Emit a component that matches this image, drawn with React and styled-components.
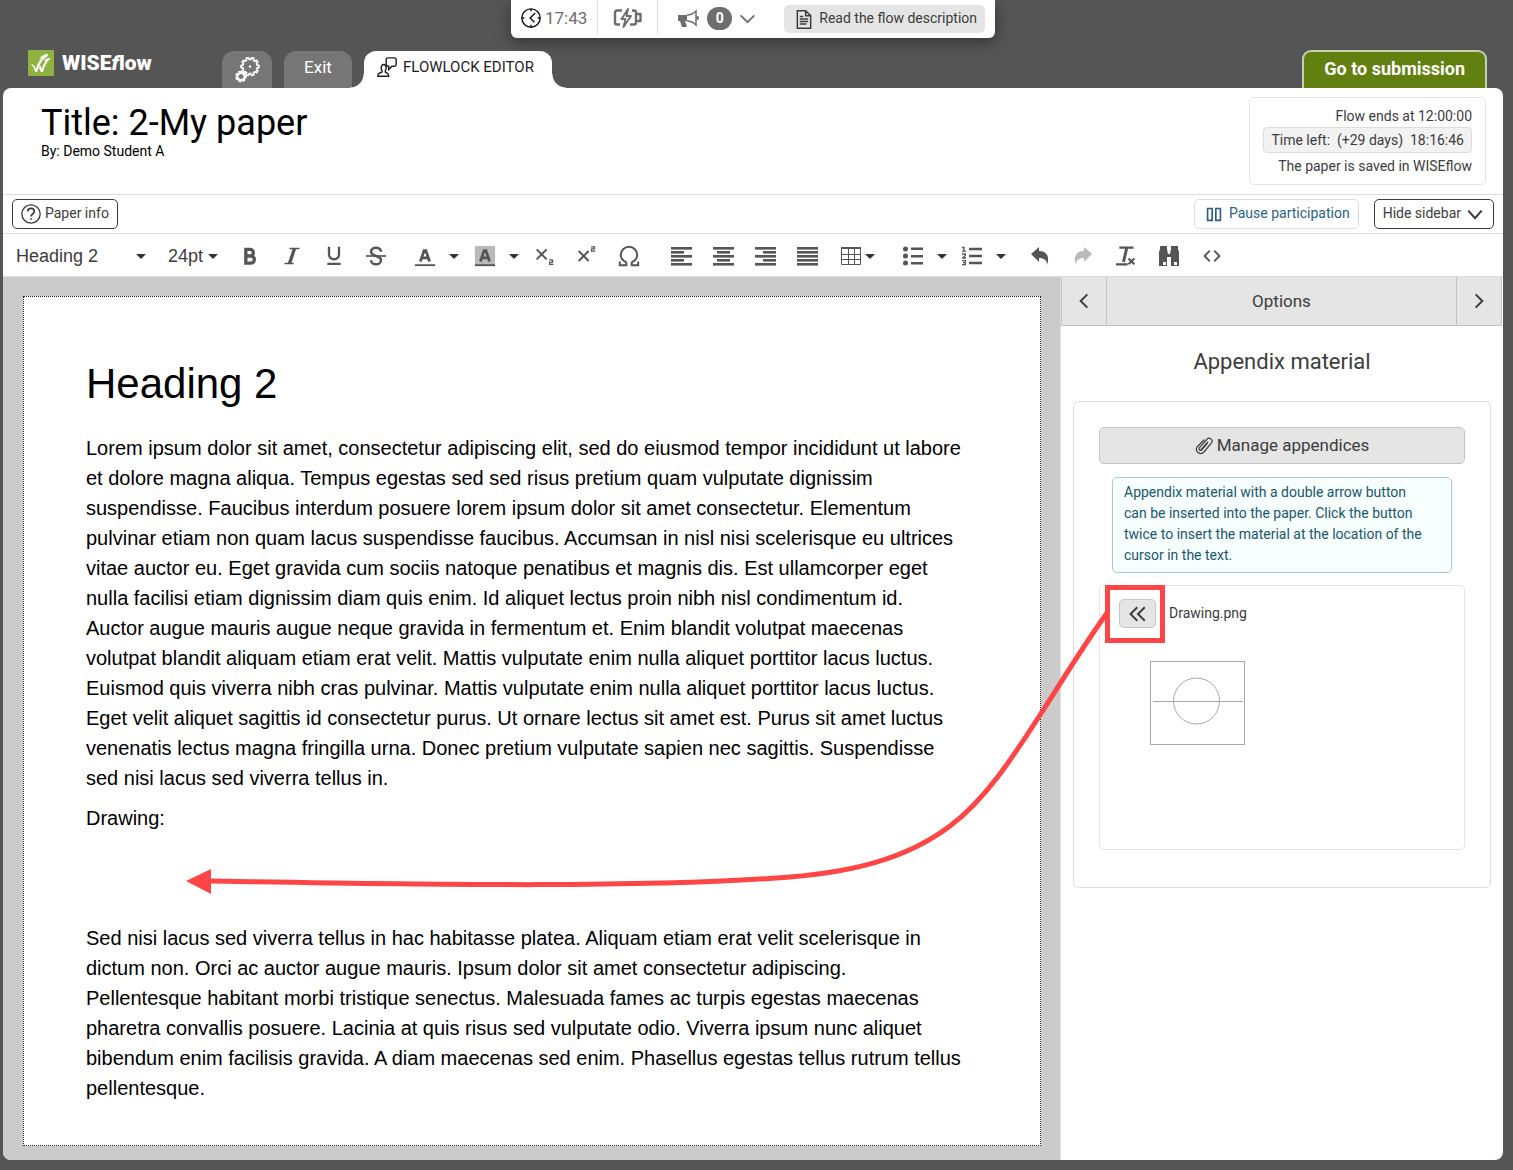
import React from 'react';
import styled, { createGlobalStyle } from 'styled-components'

const GlobalStyle = createGlobalStyle`
*{
  box-sizing: border-box;
}
body{
  margin: 0;
  background-color: #555555;
  color: #3c3c3c;
  font-family: Roboto, "Liberation Sans", sans-serif;
  font-size: 14px;
}
button, select{
  font-family: inherit;
  font-size: inherit;
  color: inherit;
  margin: 0;
  padding: 0;
  cursor: pointer;
}
svg{
  display: block;
  flex-shrink: 0;
}
`

const Page = styled.div`
min-height: 100vh;
display: flex;
flex-direction: column;
padding: 0 10px 10px 3px;
`

/* status bar */
const StatusBar = styled.div`
align-self: center;
display: flex;
align-items: center;
height: 38px;
padding-right: 10px;
background-color: white;
border-radius: 0 0 6px 6px;
box-shadow: 0 4px 16px rgba(0, 0, 0, 0.4);
color: #6e6e6e;
`
const StatusItem = styled.div`
display: flex;
align-items: center;
gap: 4px;
height: 34px;
align-self: flex-start;
padding: 2px ${props => props.$pad} 0;
font-size: 17px;
border-right: ${props => props.$last ? "none" : "1px solid #dddddd"};
`
const NewsButton = styled.button`
display: flex;
align-items: center;
gap: 8px;
border: none;
background: none;
`
const Count = styled.span`
width: 25px;
height: 23px;
border-radius: 12px;
background-color: #6e6e6e;
color: white;
font-size: 14px;
font-weight: 700;
line-height: 23px;
text-align: center;
`
const DescriptionButton = styled.button`
display: flex;
align-items: center;
gap: 5px;
height: 28px;
margin-left: 10px;
padding: 0 8px 0 10px;
border: none;
border-radius: 5px;
background-color: #e5e5e5;
color: #3c3c3c;
`

/* tabs */
const TabRow = styled.header`
display: flex;
align-items: flex-end;
margin-top: 12px;
padding: 0 16px 0 25px;
`
const Logo = styled.a`
display: flex;
align-items: center;
gap: 8px;
align-self: flex-start;
width: 194px;
color: white;
font-size: 21px;
font-weight: 900;
line-height: 26px;
text-decoration: none;
`
const Tab = styled.button`
display: flex;
align-items: center;
justify-content: center;
height: 37px;
width: ${props => props.$width};
margin-right: 12px;
padding-bottom: ${props => props.$lift || "0"};
border: none;
border-radius: 12px 12px 0 0;
background-color: #767676;
color: white;
font-size: 17px;
`
const ActiveTab = styled(Tab)`
position: relative;
justify-content: flex-start;
gap: 6px;
padding: 0 0 6px 13px;
background-color: white;
color: #1e1e1e;
font-size: 15px;
&::before, &::after{
  content: "";
  position: absolute;
  bottom: 0;
  width: 14px;
  height: 14px;
}
&::before{
  right: 100%;
  background: radial-gradient(circle at 0 0, transparent 13px, white 14px);
}
&::after{
  left: 100%;
  background: radial-gradient(circle at 100% 0, transparent 13px, white 14px);
}
`
const SubmitButton = styled.button`
height: 38px;
margin-left: auto;
padding: 0 20px 4px;
border: 2px solid #c6cfae;
border-bottom: none;
border-radius: 9px 9px 0 0;
background-color: #61800f;
color: white;
font-size: 18px;
font-weight: 700;
`

/* main panel */
const Panel = styled.main`
flex: 1;
display: flex;
flex-direction: column;
border-radius: 8px;
background-color: white;
`
const TitleArea = styled.section`
display: flex;
justify-content: space-between;
align-items: flex-start;
padding: 9px 17px 9px 38px;
border-bottom: 1px solid #dddddd;
`
const Title = styled.h1`
margin: 6px 0 0;
color: black;
font-size: 36px;
font-weight: 400;
line-height: 40px;
`
const Author = styled.p`
margin: 0;
color: black;
font-size: 14px;
line-height: 16px;
`
const InfoBox = styled.div`
display: flex;
flex-direction: column;
align-items: flex-end;
height: 88px;
padding: 8px 13px;
border: 1px solid #e5e5e5;
border-radius: 5px;
line-height: 21px;
`
const TimeLeft = styled.div`
padding: 2px 7px 1px;
margin-bottom: 3px;
border: 1px solid #dddddd;
border-radius: 4px;
background-color: #f2f2f2;
white-space: pre;
`
const ActionRow = styled.div`
display: flex;
align-items: center;
gap: 15px;
padding: 4px 9px;
border-bottom: 1px solid #dddddd;
`
const ActionButton = styled.button`
display: flex;
align-items: center;
gap: 4px;
height: 30px;
padding: 0 8px;
border: 1px solid ${props => props.$light ? "#dddddd" : "#3c3c3c"};
border-radius: 5px;
background-color: white;
color: ${props => props.$light ? "#2a5f86" : "#3c3c3c"};
margin-left: ${props => props.$push ? "auto" : "0"};
`
const Label = styled.span`
padding-bottom: 2px;
`

/* editor toolbar */
const Toolbar = styled.div`
display: flex;
align-items: center;
height: 43px;
padding: 2px 0 0 13px;
border-bottom: 1px solid #dddddd;
color: #555555;
`
const SelectBox = styled.div`
position: relative;
display: flex;
align-items: center;
width: ${props => props.$width};
margin-right: ${props => props.$gap};
svg{
  position: absolute;
  right: 0;
  pointer-events: none;
}
select{
  width: 100%;
  appearance: none;
  border: none;
  background: none;
  color: #3c3c3c;
  font-family: "Liberation Sans", Arial, sans-serif;
  font-size: 18px;
}
`
const ToolButton = styled.button`
display: flex;
align-items: center;
justify-content: center;
width: ${props => props.$narrow ? "22px" : "42px"};
height: 34px;
border: none;
background: none;
opacity: ${props => props.disabled ? "0.4" : "1"};
`
const CaretButton = styled(ToolButton)`
width: 16px;
color: #333333;
`
const ToolGroup = styled.div`
display: flex;
gap: ${props => props.$loose ? "1px" : "0"};
margin-right: ${props => props.$gap || "2px"};
`

/* editor */
const Workspace = styled.div`
flex: 1;
display: grid;
grid-template-columns: minmax(0, 1fr) 443px;
`
const EditorPane = styled.div`
padding: 19px 19px 14px 20px;
border-radius: 0 0 0 8px;
background-color: #cbcbcb;
`
const Paper = styled.article`
padding: 58px 75px 42px 62px;
border: 1px dotted #222222;
background-color: white;
color: black;
font-family: "Liberation Sans", Arial, sans-serif;
font-size: 20px;
line-height: 30px;
h2{
  margin: 0 0 20px;
  font-size: 42px;
  font-weight: 400;
  line-height: 58px;
}
p{
  min-height: 30px;
  margin: 0 0 10px;
}
p:last-child{
  margin: 0;
}
`

/* sidebar */
const Sidebar = styled.aside`
border-left: 1px solid #dddddd;
`
const SideNav = styled.div`
display: flex;
height: 49px;
margin-right: 1px;
border: 1px solid #c4c4c4;
border-top: none;
background-color: #e5e5e5;
`
const NavButton = styled.button`
display: flex;
align-items: center;
justify-content: center;
width: 45px;
border: none;
background: none;
&:first-child{
  border-right: 1px solid #c4c4c4;
}
&:last-child{
  border-left: 1px solid #c4c4c4;
}
`
const NavTitle = styled.div`
flex: 1;
font-size: 17px;
line-height: 48px;
text-align: center;
`
const SideHeading = styled.h2`
margin: 20px 0 23px;
font-size: 22px;
font-weight: 400;
line-height: 32px;
text-align: center;
`
const Card = styled.section`
margin: 0 12px;
padding: 25px 25px 37px;
border: 1px solid #dddddd;
border-radius: 6px;
`
const ManageButton = styled.button`
display: flex;
align-items: center;
justify-content: center;
gap: 4px;
width: 100%;
height: 37px;
border: 1px solid #c4c4c4;
border-radius: 5px;
background-color: #e5e5e5;
font-size: 17px;
`
const Hint = styled.p`
margin: 13px 13px 12px;
padding: 4px 23px 6px 11px;
border: 1px solid #abc8d0;
border-radius: 5px;
background-color: #f7ffff;
color: #1a566c;
line-height: 21px;
`
const Material = styled.div`
min-height: 265px;
padding: 13px 19px;
border: 1px solid #e5e5e5;
border-radius: 5px;
`
const MaterialRow = styled.div`
display: flex;
align-items: center;
gap: 13px;
`
const Marked = styled.div`
position: relative;
`
const InsertButton = styled.button`
display: flex;
align-items: center;
justify-content: center;
width: 37px;
height: 29px;
border: 1px solid #c4c4c4;
border-radius: 5px;
background-color: #e5e5e5;
`
const Frame = styled.div`
position: absolute;
top: -14px;
left: -14px;
width: 60px;
height: 58px;
border: 5px solid #ff4545;
pointer-events: none;
`
const Arrow = styled.svg`
position: absolute;
top: 0;
right: 48px;
pointer-events: none;
`
const Thumb = styled.svg`
margin: 33px 0 0 31px;
`

const Line = ({ size = 24, width = 2, children, ...rest }) => (
  <svg width={size} height={size} viewBox="0 0 24 24" fill="none" stroke="currentColor" strokeWidth={width} aria-hidden="true" {...rest}>
    {children}
  </svg>
)

const Caret = () => (
  <svg width="10" height="5" viewBox="0 0 10 5" fill="#333333" aria-hidden="true">
    <path d="M0 0h10L5 5z" />
  </svg>
)

const Chevron = ({ size = 14, width = 3, points }) => (
  <Line size={size} width={width}><polyline points={points} /></Line>
)

// outline of a cog with rounded teeth
const cog = (cx, cy, inner, outer, teeth) => {
  const step = Math.PI * 2 / teeth
  const at = (r, a) => `${(cx + r * Math.cos(a)).toFixed(2)} ${(cy + r * Math.sin(a)).toFixed(2)}`
  let d = ""
  for (let i = 0; i < teeth; i++) {
    const a = i * step
    d += `${i ? "L" : "M"}${at(inner, a - step * 0.3)}L${at(outer, a - step * 0.2)}L${at(outer, a + step * 0.2)}L${at(inner, a + step * 0.3)}`
  }
  return d + "Z"
}

const Bars = ({ rows }) => (
  <svg width="21" height="19" viewBox="0 0 21 19" fill="currentColor" aria-hidden="true">
    {rows.map(([x, w], i) => <rect key={i} x={x} y={i * 4} width={w} height="2.6" />)}
  </svg>
)

const alignments = [
  ["Align left", [[0, 21], [0, 13], [0, 21], [0, 13], [0, 21]]],
  ["Align center", [[0, 21], [4, 13], [0, 21], [4, 13], [0, 21]]],
  ["Align right", [[0, 21], [8, 13], [0, 21], [8, 13], [0, 21]]],
  ["Justify", [[0, 21], [0, 21], [0, 21], [0, 21], [0, 21]]],
]

const TopStatus = () => (
  <StatusBar>
    <StatusItem $pad="10px">
      <Line size={20} width={1.7} color="#111111">
        <circle cx="12" cy="12" r="11" />
        <path d="M17 6l-6 6 5 5" />
        <path d="M12 1v3M12 20v3M1 12h3M20 12h3" />
      </Line>
      17:43
    </StatusItem>
    <StatusItem $pad="15px">
      <svg width="29" height="20" viewBox="0 0 29 20" fill="none" stroke="currentColor" strokeWidth="2.4" strokeLinejoin="round" aria-label="Charging">
        <path d="M9 2.500H4a2 2 0 0 0-2 2v10a2 2 0 0 0 2 2h3M19 2.500h2a2 2 0 0 1 2 2v10a2 2 0 0 1-2 2h-4M24 6h3.500v7H24" />
        <path d="M15 1L8.500 11h4l-2 8 7.500-11h-4.500z" strokeWidth="1.900" />
      </svg>
    </StatusItem>
    <StatusItem $pad="19px" $last>
      <NewsButton aria-label="Announcements">
        <svg width="22" height="20" viewBox="0 0 22 20" aria-hidden="true">
          <path d="M1 7h9v6H8l2 6H5l-2-6H1z" fill="#6e6e6e" />
          <path d="M10 7c4 0 7-2 9-4v14c-2-2-5-4-9-4M19 9h2v2h-2" fill="none" stroke="#6e6e6e" strokeWidth="1.5" />
        </svg>
        <Count>0</Count>
        <Chevron size={15} points="1,7 12,18 23,7" />
      </NewsButton>
    </StatusItem>
    <DescriptionButton>
      <Line size={20} width={1.8}>
        <path d="M4 2h10l6 6v15H4zM14 2v6h6M7 12h10M7 15h10M7 18h8M7 9h4" />
      </Line>
      <Label>Read the flow description</Label>
    </DescriptionButton>
  </StatusBar>
)

const Tabs = () => (
  <TabRow>
    <Logo href="#">
      <svg width="26" height="26" viewBox="0 0 26 26" aria-hidden="true">
        <rect width="26" height="26" rx="1" fill="#8fb240" />
        <path d="M3 14c2 0 3 1 5 5 1-5 3-8 6-11l-3 1c2-3 5-5 9-5 0 2-1 3-3 4-4 3-6 8-8 14H7c-1-4-2-6-4-8z" fill="white" />
        <path d="M12 15l2 4c1-4 2-6 4-8l-2 0c1-2 3-3 6-3 0 2-1 2-2 3-2 3-4 6-5 11h-2l-2-4z" fill="white" />
      </svg>
      <span>WISE<i>f</i>low</span>
    </Logo>
    <Tab $width="50px" aria-label="Settings">
      <svg width="26" height="26" viewBox="0 0 26 26" fill="none" stroke="white" strokeWidth="1.7" strokeLinejoin="round" aria-hidden="true">
        <path d={cog(16, 9.5, 7.2, 9, 10)} />
        <circle cx="16" cy="9.5" r="1.2" fill="white" stroke="none" />
        <path d={cog(7, 19.5, 3.2, 5, 7)} />
      </svg>
    </Tab>
    <Tab $width="68px" $lift="6px">Exit</Tab>
    <ActiveTab $width="188px">
      <Line size={20} width={1.7}>
        <path d="M8 9c-2 0-3 2-3 4 0 1 0 2 1 3v2l-4 2c-1 1-1 2-1 3h13c0-2 0-2-1-3l-3-2v-2c1-1 1-2 1-3 0-2-1-4-3-4z" />
        <path d="M13 1h8c1 0 2 1 2 2v6c0 1-1 2-2 2h-3l-4 4v-4c-2 0-3-1-3-2V3c0-1 1-2 2-2z" />
      </Line>
      FLOWLOCK EDITOR
    </ActiveTab>
    <SubmitButton>Go to submission</SubmitButton>
  </TabRow>
)

const EditorToolbar = () => (
  <Toolbar role="toolbar">
    <SelectBox $width="130px" $gap="22px">
      <select aria-label="Text style"><option>Heading 2</option></select>
      <Caret />
    </SelectBox>
    <SelectBox $width="50px" $gap="11px">
      <select aria-label="Font size"><option>24pt</option></select>
      <Caret />
    </SelectBox>
    <ToolGroup $gap="7px">
      <ToolButton aria-label="Bold">
        <Line size={20} width={4}><path d="M7 3v18M5 4h7a4 4 0 0 1 0 8H7h6a4 4 0 0 1 0 8.500H5" /></Line>
      </ToolButton>
      <ToolButton aria-label="Italic">
        <Line size={20}><path d="M9 3h12M3 21h11" /><path d="M15 3L9 21" strokeWidth="4" /></Line>
      </ToolButton>
      <ToolButton aria-label="Underline">
        <Line size={20} width={2.8}><path d="M6 1v9a6 6 0 0 0 12 0V1M4 21.500h16" /></Line>
      </ToolButton>
      <ToolButton aria-label="Strikethrough">
        <Line size={20} width={3}><path d="M18 7c0-3-3-5-6-5s-6 2-6 5c0 6 12 4 12 10 0 3-3 5-6 5s-6-2-6-5" /><path d="M0 12h24" strokeWidth="2" /></Line>
      </ToolButton>
    </ToolGroup>
    <ToolGroup>
      <ToolButton aria-label="Text color">
        <Line size={22} width={3}><path d="M7 18l4-12h2l4 12M8 14h8" /><path d="M1 22h22" strokeWidth="2" /></Line>
      </ToolButton>
      <CaretButton aria-label="Text color options"><Caret /></CaretButton>
    </ToolGroup>
    <ToolGroup>
      <ToolButton aria-label="Background color">
        <Line size={22} width={3}><path d="M1 1h22v22H1z" fill="#b9b9b9" stroke="none" /><path d="M7 18l4-12h2l4 12M8 14h8" /><path d="M1 22h22" strokeWidth="2" /></Line>
      </ToolButton>
      <CaretButton aria-label="Background color options"><Caret /></CaretButton>
    </ToolGroup>
    <ToolGroup $gap="10px">
      <ToolButton aria-label="Subscript">
        <Line size={20} width={2.4}><path d="M2 4l12 12M14 4L2 16" /><path d="M17 17h4v2.500h-3.500V22H22" strokeWidth="1.5" /></Line>
      </ToolButton>
      <ToolButton aria-label="Superscript">
        <Line size={20} width={2.4}><path d="M2 6l12 12M14 6L2 18" /><path d="M17 1h4v2.500h-3.500V6H22" strokeWidth="1.5" /></Line>
      </ToolButton>
      <ToolButton aria-label="Special character">
        <Line size={22} width={2.2}><path d="M2 18v4h7v-3C5 17 3 14 3 11c0-5 4-9 9-9s9 4 9 9c0 3-2 6-6 8v3h7v-4" /></Line>
      </ToolButton>
    </ToolGroup>
    <ToolGroup $gap="12px">
      {alignments.map(([label, rows]) => (
        <ToolButton key={label} aria-label={label}><Bars rows={rows} /></ToolButton>
      ))}
    </ToolGroup>
    <ToolGroup $gap="14px">
      <ToolButton $narrow aria-label="Table">
        <svg width="20" height="18" viewBox="0 0 20 18" fill="none" stroke="currentColor" aria-hidden="true">
          <path d="M.5 1v16.500h19V1M.5 7.500h19M.5 12.500h19M7.500 1v16M13.500 1v16" />
          <path d="M0 1h20" strokeWidth="2" />
        </svg>
      </ToolButton>
      <CaretButton aria-label="Table options"><Caret /></CaretButton>
    </ToolGroup>
    <ToolGroup $gap="1px">
      <ToolButton aria-label="Bullet list">
        <svg width="20" height="20" viewBox="0 0 20 20" fill="currentColor" aria-hidden="true">
          <path d="M8 1.500h12.500v2.500H8zM8 9h12.500v2.500H8zM8 16h12.500v2.500H8z" />
          <circle cx="2.500" cy="3" r="2.500" /><circle cx="2.500" cy="10" r="2.500" /><circle cx="2.500" cy="17" r="2.500" />
        </svg>
      </ToolButton>
      <CaretButton aria-label="Bullet list options"><Caret /></CaretButton>
    </ToolGroup>
    <ToolGroup $gap="10px">
      <ToolButton aria-label="Numbered list">
        <svg width="20" height="20" viewBox="0 0 20 20" fill="none" stroke="currentColor" strokeWidth="1.300" aria-hidden="true">
          <path d="M7 3h13M7 10h13M7 17h13" strokeWidth="2.500" />
          <path d="M0 1.500h2V5M0 5.200h4M0 8h3.300v1.500L.7 12H4M0 14.700h3.300v4H0M1 16.700h2" />
        </svg>
      </ToolButton>
      <CaretButton aria-label="Numbered list options"><Caret /></CaretButton>
    </ToolGroup>
    <ToolGroup $loose>
      <ToolButton aria-label="Undo">
        <svg width="20" height="20" viewBox="0 0 20 20" fill="currentColor" aria-hidden="true">
          <path d="M1 8l8-7v4c8 0 11 6 8 14 0-5-3-7-8-7v4z" />
        </svg>
      </ToolButton>
      <ToolButton aria-label="Redo" disabled>
        <svg width="20" height="20" viewBox="0 0 20 20" fill="currentColor" aria-hidden="true">
          <path d="M19 8l-8-7v4C3 5 0 11 3 19c0-5 3-7 8-7v4z" />
        </svg>
      </ToolButton>
      <ToolButton aria-label="Clear formatting">
        <Line size={20} width={2.6}><path d="M4 2h17M0 22h14M15 15l7 7M22 15l-7 7" /><path d="M13 2L9 19" strokeWidth="3.500" /></Line>
      </ToolButton>
      <ToolButton aria-label="Find and replace">
        <svg width="22" height="20" viewBox="0 0 22 20" fill="currentColor" aria-hidden="true">
          <path d="M2 0h7v3l1 5h2l1-5V0h7v3l1 3v14h-8v-9H9v9H1V6l1-3z" />
          <path d="M5 16h3v3H5zM16 16h3v3h-3zM2 3h7M13 3h7" fill="white" />
        </svg>
      </ToolButton>
      <ToolButton aria-label="Source code">
        <Line size={18} width={2.400}><path d="M9 5l-7 7 7 7M15 5l7 7-7 7" /></Line>
      </ToolButton>
    </ToolGroup>
  </Toolbar>
)

const AppendixSidebar = () => (
  <Sidebar>
    <SideNav>
      <NavButton aria-label="Previous"><Chevron size={16} points="17,2 7,12 17,22" /></NavButton>
      <NavTitle>Options</NavTitle>
      <NavButton aria-label="Next"><Chevron size={16} points="7,2 17,12 7,22" /></NavButton>
    </SideNav>
    <SideHeading>Appendix material</SideHeading>
    <Card>
      <ManageButton>
        <Line size={18} width={1.6} strokeLinecap="round">
          <path d="M16 9l-7 8c-2 2-5 0-3-3l10-11c3-4 9 1 6 5L12 20c-5 5-13-1-9-7l9-9" />
          <path d="M17 7l-9 10" />
        </Line>
        <Label>Manage appendices</Label>
      </ManageButton>
      <Hint>
        Appendix material with a double arrow button can be inserted into the paper. Click the button twice to insert the material at the location of the cursor in the text.
      </Hint>
      <Material>
        <MaterialRow>
          <Marked>
            <InsertButton aria-label="Insert Drawing.png">
              <Line size={18} width={2.600}><path d="M11 3l-9 9 9 9M21 3l-9 9 9 9" /></Line>
            </InsertButton>
            <Frame />
            <Arrow width="924" height="300" viewBox="184 599 924 300" aria-hidden="true">
              <path d="M1107 613C1083 646 1062 681 1040 715C1013 757 985 800 950 826C905 860 850 872 790 877C640 889 400 884 209 881" fill="none" stroke="#ff4545" strokeWidth="5" />
              <path d="M186 881l25-12v25z" fill="#ff4545" />
            </Arrow>
          </Marked>
          <Label>Drawing.png</Label>
        </MaterialRow>
        <Thumb width="95" height="84" viewBox="0 0 95 84" fill="none" stroke="#a8a8a8" role="img" aria-label="Drawing.png">
          <rect x=".5" y=".5" width="94" height="83" />
          <circle cx="46.500" cy="40" r="23" />
          <path d="M3 40.500h90" />
        </Thumb>
      </Material>
    </Card>
  </Sidebar>
)

const App = () => {
  return (
    <>
      <GlobalStyle />
      <Page>
        <TopStatus />
        <Tabs />
        <Panel>
          <TitleArea>
            <div>
              <Title>Title: 2-My paper</Title>
              <Author>By: Demo Student A</Author>
            </div>
            <InfoBox>
              <div>Flow ends at 12:00:00</div>
              <TimeLeft>Time left:  (+29 days)  18:16:46</TimeLeft>
              <div>The paper is saved in WISEflow</div>
            </InfoBox>
          </TitleArea>
          <ActionRow>
            <ActionButton>
              <Line size={20} width={1.6}>
                <circle cx="12" cy="12" r="11" />
                <path d="M8 9c0-5 8-5 8 0 0 3-4 3-4 6M12 17v2" strokeWidth="2" />
              </Line>
              <Label>Paper info</Label>
            </ActionButton>
            <ActionButton $light $push>
              <Line size={22} width={1.8}><path d="M5 6h5v13H5zM14 6h5v13h-5z" /></Line>
              <Label>Pause participation</Label>
            </ActionButton>
            <ActionButton>
              <Label>Hide sidebar</Label>
              <Chevron size={20} width={2.5} points="4,8 12,17 20,8" />
            </ActionButton>
          </ActionRow>
          <EditorToolbar />
          <Workspace>
            <EditorPane>
              <Paper>
                <h2>Heading 2</h2>
                <p>
                  Lorem ipsum dolor sit amet, consectetur adipiscing elit, sed do eiusmod tempor incididunt ut labore
                  et dolore magna aliqua. Tempus egestas sed sed risus pretium quam vulputate dignissim
                  suspendisse. Faucibus interdum posuere lorem ipsum dolor sit amet consectetur. Elementum
                  pulvinar etiam non quam lacus suspendisse faucibus. Accumsan in nisl nisi scelerisque eu ultrices
                  vitae auctor eu. Eget gravida cum sociis natoque penatibus et magnis dis. Est ullamcorper eget
                  nulla facilisi etiam dignissim diam quis enim. Id aliquet lectus proin nibh nisl condimentum id.
                  Auctor augue mauris augue neque gravida in fermentum et. Enim blandit volutpat maecenas
                  volutpat blandit aliquam etiam erat velit. Mattis vulputate enim nulla aliquet porttitor lacus luctus.
                  Euismod quis viverra nibh cras pulvinar. Mattis vulputate enim nulla aliquet porttitor lacus luctus.
                  Eget velit aliquet sagittis id consectetur purus. Ut ornare lectus sit amet est. Purus sit amet luctus
                  venenatis lectus magna fringilla urna. Donec pretium vulputate sapien nec sagittis. Suspendisse
                  sed nisi lacus sed viverra tellus in.
                </p>
                <p>Drawing:</p>
                <p />
                <p />
                <p>
                  Sed nisi lacus sed viverra tellus in hac habitasse platea. Aliquam etiam erat velit scelerisque in
                  dictum non. Orci ac auctor augue mauris. Ipsum dolor sit amet consectetur adipiscing.
                  Pellentesque habitant morbi tristique senectus. Malesuada fames ac turpis egestas maecenas
                  pharetra convallis posuere. Lacinia at quis risus sed vulputate odio. Viverra ipsum nunc aliquet
                  bibendum enim facilisis gravida. A diam maecenas sed enim. Phasellus egestas tellus rutrum tellus
                  pellentesque.
                </p>
              </Paper>
            </EditorPane>
            <AppendixSidebar />
          </Workspace>
        </Panel>
      </Page>
    </>
  )
}

export default App
